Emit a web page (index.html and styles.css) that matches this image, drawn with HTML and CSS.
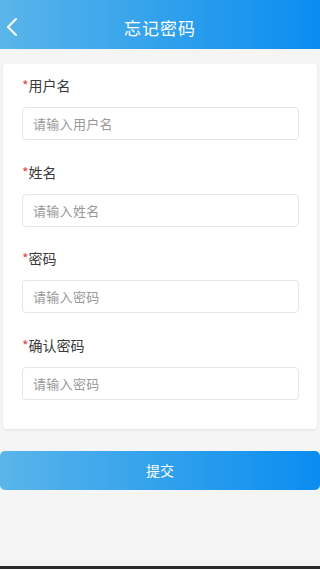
FILE: index.html
```html
<!DOCTYPE html>
<html lang="zh-CN">
<head>
    <meta charset="UTF-8">
    <meta name="viewport" content="width=device-width, initial-scale=1.0">
    <title>忘记密码</title>
    <link rel="stylesheet" href="styles.css">
</head>
<body>
    <div class="header">
        <a class="back" href="#">
            <svg width="12" height="20" viewBox="0 0 12 20"><path d="M10 2 L2 10 L10 18" fill="none" stroke="#fff" stroke-width="2" stroke-linecap="round" stroke-linejoin="round"/></svg>
        </a>
        <div class="title">忘记密码</div>
    </div>

    <div class="card">
        <div class="field">
            <label><span class="star">*</span>用户名</label>
            <input type="text" placeholder="请输入用户名">
        </div>
        <div class="field">
            <label><span class="star">*</span>姓名</label>
            <input type="text" placeholder="请输入姓名">
        </div>
        <div class="field">
            <label><span class="star">*</span>密码</label>
            <input type="password" placeholder="请输入密码">
        </div>
        <div class="field">
            <label><span class="star">*</span>确认密码</label>
            <input type="password" placeholder="请输入密码">
        </div>
    </div>

    <button class="submit">提交</button>

    <div class="bottom-line"></div>
</body>
</html>
```

FILE: styles.css
```css
body {
    margin: 0;
    height: 569px;
    display: flex;
    flex-direction: column;
    background-color: #f5f5f5;
    font-family: 'Noto Sans CJK SC', 'Noto Sans', sans-serif;
    overflow: hidden;
}

.header {
    height: 49px;
    flex-shrink: 0;
    display: flex;
    align-items: center;
    justify-content: center;
    position: relative;
    background: linear-gradient(to right, #5ab5e9, #0a8df0);
    color: #fff;
}

.back {
    position: absolute;
    left: 6px;
    top: 17px;
    display: flex;
}

.title {
    font-size: 17px;
    letter-spacing: 1px;
    margin-top: 6px;
}

.card {
    margin: 15px 3px 0;
    padding: 12px 18px 29px 19px;
    background-color: #fff;
    border-radius: 4px;
    box-shadow: 0 1px 3px rgba(0, 0, 0, 0.08);
}

.field {
    display: flex;
    flex-direction: column;
}

.field + .field {
    margin-top: 22.5px;
}

.field label {
    font-size: 14px;
    line-height: 19px;
    color: #3a3a3a;
}

.star {
    color: #e0474c;
}

.field input {
    margin-top: 12px;
    height: 33px;
    box-sizing: border-box;
    border: 1px solid #e6e6e6;
    border-radius: 4px;
    padding: 0 10px;
    font-family: inherit;
    font-size: 13px;
    letter-spacing: 0.3px;
    color: #333;
    outline: none;
}

.field input::placeholder {
    color: #999;
}

.submit {
    margin-top: 22px;
    height: 39px;
    flex-shrink: 0;
    border: none;
    border-radius: 5px;
    background: linear-gradient(to right, #5ab5e9, #0a8df0);
    color: #fff;
    font-family: inherit;
    font-size: 14px;
}

.bottom-line {
    margin-top: auto;
    height: 3px;
    background-color: #2a2a2a;
}
```
